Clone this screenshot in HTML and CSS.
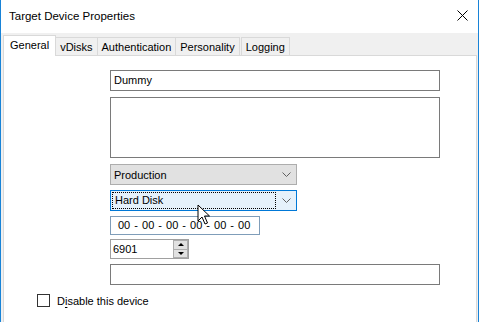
FILE: index.html
```html
<!DOCTYPE html>
<html lang="en">
<head>
    <meta charset="UTF-8">
    <title>Target Device Properties</title>
    <link rel="stylesheet" href="styles.css">
</head>
<body>
<div class="window">
    <div class="titlebar">
        <span class="title">Target Device Properties</span>
        <svg class="close" width="11" height="11" viewBox="0 0 11 11">
            <path d="M0.5 0.5 L10.5 10.5 M10.5 0.5 L0.5 10.5" stroke="#000" stroke-width="1" fill="none"/>
        </svg>
    </div>

    <div class="client">
        <div class="tabs">
            <div class="tab active">General</div>
            <div class="tab">vDisks</div>
            <div class="tab">Authentication</div>
            <div class="tab">Personality</div>
            <div class="tab">Logging</div>
        </div>

        <div class="panel">
            <div class="fields">
                <div class="textbox name">Dummy</div>
                <div class="textbox desc"></div>

                <div class="combo">
                    <span class="combo-text">Production</span>
                    <svg class="chevron" width="9" height="5" viewBox="0 0 9 5">
                        <path d="M0.5 0.5 L4.5 4.5 L8.5 0.5" stroke="#606060" fill="none"/>
                    </svg>
                </div>

                <div class="combo focused">
                    <span class="combo-text"><span class="focus-rect">Hard Disk</span></span>
                    <svg class="chevron" width="9" height="5" viewBox="0 0 9 5">
                        <path d="M0.5 0.5 L4.5 4.5 L8.5 0.5" stroke="#606060" fill="none"/>
                    </svg>
                </div>

                <div class="mac">00 - 00 - 00 - 00 - 00 - 00</div>

                <div class="spinner">
                    <span class="spin-text">6901</span>
                    <div class="spin-buttons">
                        <div class="spin-btn"><span class="arrow-up"></span></div>
                        <div class="spin-btn"><span class="arrow-down"></span></div>
                    </div>
                </div>

                <div class="textbox last"></div>
            </div>

            <label class="check-row">
                <span class="checkbox"></span>
                <span class="check-label">D<u>i</u>sable this device</span>
            </label>

            <!-- mouse pointer over the MAC field -->
            <svg class="pointer" width="14" height="22" viewBox="0 0 14 22">
                <path d="M1 1 L1 17 L5 13 L8 20 L10.5 19 L7.5 12 L12.5 12 Z" fill="#fff" stroke="#000" stroke-width="1"/>
            </svg>
        </div>
    </div>
</div>
</body>
</html>
```

FILE: styles.css
```css
body {
    margin: 0;
    padding: 0;
    background: #f0f0f0;
    font-family: "Liberation Sans", Arial, sans-serif;
    color: #000;
}

.window {
    width: 477px;
    height: 322px;
    border-left: 1px solid #1883d7;
    border-right: 1px solid #1883d7;
    background: #f0f0f0;
    overflow: hidden;
}

.titlebar {
    height: 33px;
    background: #ffffff;
    display: flex;
    align-items: center;
    justify-content: space-between;
    padding: 0 9px 2px 8px;
    box-sizing: border-box;
}

.title {
    font-size: 11.5px;
}

.close {
    display: block;
    margin-right: 1px;
}

.client {
    padding: 2px 1px 0 2px;
}

.tabs {
    display: flex;
    height: 20px;
    align-items: flex-end;
    position: relative;
    z-index: 1;
}

.tab {
    height: 18px;
    box-sizing: border-box;
    padding: 2px 4px 0 4px;
    border: 1px solid #d9d9d9;
    border-bottom: none;
    margin-left: -1px;
    background: #f0f0f0;
    font-size: 11px;
    line-height: 15px;
}

.tab:first-child {
    margin-left: 0;
}

.tab:last-child {
    margin-left: 1px;
}

.tab.active {
    height: 21px;
    margin-bottom: -1px;
    background: #ffffff;
    padding: 2px 6px 0 6px;
    line-height: 14px;
    position: relative;
    z-index: 2;
}

.panel {
    position: relative;
    height: 280px;
    background: #ffffff;
    border: 1px solid #d9d9d9;
    box-sizing: border-box;
}

.fields {
    margin-left: 106px;
    padding-top: 14px;
    display: flex;
    flex-direction: column;
    align-items: flex-start;
    font-size: 11px;
}

.textbox {
    box-sizing: border-box;
    width: 330px;
    border: 1px solid #7a7a7a;
    background: #ffffff;
    padding: 0 3px;
}

.name {
    height: 21px;
    line-height: 19px;
}

.desc {
    height: 61px;
    margin-top: 6px;
}

.combo {
    box-sizing: border-box;
    width: 187px;
    height: 21px;
    margin-top: 6px;
    border: 1px solid #adadad;
    background: #e1e1e1;
    display: flex;
    align-items: center;
    justify-content: space-between;
    padding: 0 5px 0 3px;
}

.combo + .combo {
    margin-top: 5px;
}

.combo.focused {
    border-color: #0078d7;
    background: #e5f1fb;
    padding-left: 1px;
}

.focus-rect {
    display: inline-block;
    width: 160px;
    height: 15px;
    line-height: 15px;
    padding-left: 2px;
    border: 1px dotted #000;
}

.chevron {
    display: block;
}

.mac {
    box-sizing: border-box;
    width: 150px;
    height: 19px;
    margin-top: 5px;
    border: 1px solid #7f9db9;
    background: #ffffff;
    padding-left: 7px;
    line-height: 17px;
    word-spacing: 1px;
}

.spinner {
    box-sizing: border-box;
    width: 79px;
    height: 20px;
    margin-top: 4px;
    border: 1px solid #a0a0a0;
    background: #ffffff;
    display: flex;
    justify-content: space-between;
    align-items: stretch;
}

.spin-text {
    padding-left: 2px;
    line-height: 18px;
}

.spin-buttons {
    width: 15px;
    display: flex;
    flex-direction: column;
}

.spin-btn {
    flex: 1;
    border: 1px solid #adadad;
    background: #e1e1e1;
    display: flex;
    align-items: center;
    justify-content: center;
}

.spin-btn + .spin-btn {
    border-top: none;
}

.arrow-up {
    width: 0;
    height: 0;
    border-left: 3px solid transparent;
    border-right: 3px solid transparent;
    border-bottom: 3px solid #000;
}

.arrow-down {
    width: 0;
    height: 0;
    border-left: 3px solid transparent;
    border-right: 3px solid transparent;
    border-top: 3px solid #000;
}

.last {
    height: 21px;
    margin-top: 5px;
}

.check-row {
    display: flex;
    align-items: center;
    margin: 9px 0 0 33px;
    font-size: 11px;
}

.checkbox {
    width: 13px;
    height: 13px;
    box-sizing: border-box;
    border: 1px solid #333;
    background: #fff;
    margin-right: 7px;
}

.check-label u {
    text-underline-offset: 2px;
}

.pointer {
    position: absolute;
    left: 193px;
    top: 148px;
}
```
